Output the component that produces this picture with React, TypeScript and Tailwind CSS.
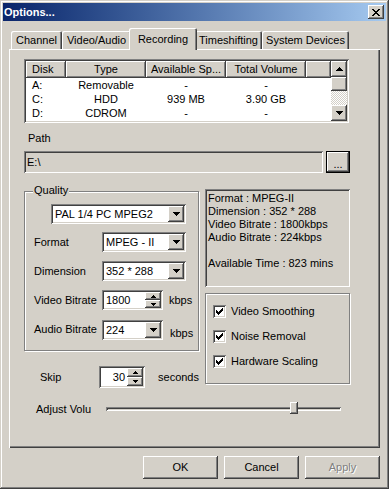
import React from "react"

const raised = "bg-[#d4d0c8] shadow-[inset_-1px_-1px_#404040,inset_1px_1px_#ffffff,inset_-2px_-2px_#808080,inset_2px_2px_#d4d0c8]"
const sunken = "shadow-[inset_1px_1px_#808080,inset_-1px_-1px_#ffffff,inset_2px_2px_#404040,inset_-2px_-2px_#d4d0c8]"
const etched = "border border-[#808080] shadow-[inset_1px_1px_#ffffff,1px_1px_#ffffff]"

function Arrow({ up, small }: { up?: boolean; small?: boolean }) {
  const rows = small ? [5, 3, 1] : [7, 5, 3, 1]
  const w = rows[0]
  const list = up ? [...rows].reverse() : rows
  return (
    <svg width={w} height={rows.length} viewBox={`0 0 ${w} ${rows.length}`} shapeRendering="crispEdges">
      {list.map((r, i) => (
        <rect key={i} x={(w - r) / 2} y={i} width={r} height={1} fill="#000" />
      ))}
    </svg>
  )
}

function Combo({ value, className }: { value: string; className: string }) {
  return (
    <div className={`flex h-[20px] bg-white p-[2px] ${sunken} ${className}`}>
      <div className="flex-1 pl-[2px] leading-[16px] whitespace-nowrap overflow-hidden">{value}</div>
      <div className={`flex w-[16px] items-center justify-center ${raised}`}>
        <Arrow />
      </div>
    </div>
  )
}

function Spin({ value, className, right }: { value: string; className: string; right?: boolean }) {
  return (
    <div className={`flex bg-white p-[2px] ${sunken} ${className}`}>
      <div className={`flex flex-1 items-center px-[2px] ${right ? "justify-end" : ""}`}>{value}</div>
      <div className="flex w-[16px] flex-col">
        <div className={`flex flex-1 items-center justify-center ${raised}`}>
          <Arrow up small />
        </div>
        <div className={`flex flex-1 items-center justify-center ${raised}`}>
          <Arrow small />
        </div>
      </div>
    </div>
  )
}

function Check({ label, first }: { label: string; first?: boolean }) {
  return (
    <div className={`flex h-[13px] items-center ${first ? "" : "mt-[12px]"}`}>
      <div className={`flex h-[13px] w-[13px] items-center justify-center bg-white ${sunken}`}>
        <svg width="7" height="7" viewBox="0 0 7 7" shapeRendering="crispEdges">
          <path d="M0 2h1v3h-1zM1 3h1v3h-1zM2 4h1v3h-1zM3 3h1v3h-1zM4 2h1v3h-1zM5 1h1v3h-1zM6 0h1v3h-1z" fill="#000" />
        </svg>
      </div>
      <span className="ml-[5px] leading-[13px]">{label}</span>
    </div>
  )
}

const cols = ["w-[40px]", "w-[80px]", "w-[80px]", "w-[80px]"]
const disks = [
  ["A:", "Removable", "-", "-"],
  ["C:", "HDD", "939 MB", "3.90 GB"],
  ["D:", "CDROM", "-", "-"],
]

export default function App() {
  return (
    <div className="h-[489px] w-[389px] bg-[#d4d0c8] p-[3px] font-['Liberation_Sans',Arial,sans-serif] text-[11px] text-black shadow-[inset_-1px_-1px_#404040,inset_1px_1px_#d4d0c8,inset_-2px_-2px_#808080,inset_2px_2px_#ffffff]">
      {/* title bar */}
      <div className="flex h-[18px] items-center justify-between bg-gradient-to-r from-[#0a246a] to-[#a6caf0] pl-[1px] pr-[2px]">
        <span className="text-[11px] font-bold text-white">Options...</span>
        <div className={`flex h-[14px] w-[16px] items-center justify-center ${raised}`}>
          <svg width="8" height="7" viewBox="0 0 8 7" shapeRendering="crispEdges">
            <path d="M0 0h2v1h-2zM6 0h2v1h-2zM1 1h2v1h-2zM5 1h2v1h-2zM2 2h4v1h-4zM3 3h2v1h-2zM2 4h4v1h-4zM1 5h2v1h-2zM5 5h2v1h-2zM0 6h2v1h-2zM6 6h2v1h-2z" fill="#000" />
          </svg>
        </div>
      </div>

      {/* tabs */}
      <div className="ml-[6px] mt-[7px] flex h-[21px] items-end pl-[2px]">
        <div className="flex h-[18px] w-[51px] items-center justify-center rounded-t-[2px] shadow-[inset_1px_1px_#ffffff,inset_-1px_0_#404040,inset_-2px_0_#808080]">Channel</div>
        <div className="flex h-[18px] w-[69px] items-center justify-center rounded-t-[2px] shadow-[inset_1px_1px_#ffffff,inset_-1px_0_#404040,inset_-2px_0_#808080]">Video/Audio</div>
        <div className="relative z-10 -mx-[2px] -mb-[1px] flex h-[22px] w-[68px] items-start justify-center rounded-t-[2px] bg-[#d4d0c8] pt-[3px] shadow-[inset_1px_1px_#ffffff,inset_-1px_0_#404040,inset_-2px_0_#808080]">Recording</div>
        <div className="flex h-[18px] w-[67px] items-center justify-center rounded-t-[2px] shadow-[inset_1px_1px_#ffffff,inset_-1px_0_#404040,inset_-2px_0_#808080]">Timeshifting</div>
        <div className="flex h-[18px] w-[87px] items-center justify-center rounded-t-[2px] shadow-[inset_1px_1px_#ffffff,inset_-1px_0_#404040,inset_-2px_0_#808080]">System Devices</div>
      </div>

      {/* panel */}
      <div className="ml-[6px] flex h-[399px] w-[371px] flex-col pl-[15px] pt-[10px] shadow-[inset_1px_1px_#ffffff,inset_-1px_-1px_#404040,inset_-2px_-2px_#808080]">
        {/* disk list */}
        <div className={`flex h-[64px] w-[325px] bg-white p-[2px] ${sunken}`}>
          <div className="flex flex-1 flex-col">
            <div className="flex h-[17px]">
              <div className={`${cols[0]} ${raised} pl-[6px] leading-[17px]`}>Disk</div>
              <div className={`${cols[1]} ${raised} text-center leading-[17px]`}>Type</div>
              <div className={`${cols[2]} ${raised} text-center leading-[17px] whitespace-nowrap`}>Available Sp...</div>
              <div className={`${cols[3]} ${raised} text-center leading-[17px]`}>Total Volume</div>
              <div className={`flex-1 ${raised}`} />
            </div>
            {disks.map((d) => (
              <div key={d[0]} className="flex h-[14px] leading-[14px]">
                <div className={`${cols[0]} pl-[6px]`}>{d[0]}</div>
                <div className={`${cols[1]} text-center`}>{d[1]}</div>
                <div className={`${cols[2]} text-center`}>{d[2]}</div>
                <div className={`${cols[3]} text-center`}>{d[3]}</div>
              </div>
            ))}
          </div>
          <div className="flex w-[16px] flex-col">
            <div className={`flex h-[16px] items-center justify-center ${raised}`}>
              <Arrow up />
            </div>
            <div className={`h-[14px] ${raised}`} />
            <div className="flex-1 bg-[repeating-conic-gradient(#ffffff_0_25%,#d4d0c8_0_50%)] bg-[length:2px_2px]" />
            <div className={`flex h-[16px] items-center justify-center ${raised}`}>
              <Arrow />
            </div>
          </div>
        </div>

        {/* path */}
        <div className="ml-[4px] mt-[9px] leading-[13px]">Path</div>
        <div className="mt-[6px] flex gap-[3px]">
          <div className={`flex h-[22px] w-[299px] items-center pl-[3px] ${sunken}`}>E:\</div>
          <div className="h-[22px] w-[24px] border border-black">
            <div className={`flex h-full w-full items-end justify-center pb-[3px] leading-[10px] ${raised}`}>...</div>
          </div>
        </div>

        <div className="mt-[16px] flex gap-[6px]">
          {/* left column */}
          <div className="flex w-[175px] flex-col">
            <div className={`relative mt-[2px] flex h-[160px] flex-col pt-[12px] ${etched}`}>
              <span className="absolute -top-[8px] left-[8px] bg-[#d4d0c8] px-[1px] leading-[13px]">Quality</span>
              <Combo value="PAL 1/4 PC MPEG2" className="ml-[26px] w-[135px]" />
              <div className="mt-[8px] flex items-center pl-[9px]">
                <span className="w-[68px]">Format</span>
                <Combo value="MPEG - II" className="w-[84px]" />
              </div>
              <div className="mt-[9px] flex items-center pl-[9px]">
                <span className="w-[68px]">Dimension</span>
                <Combo value="352 * 288" className="w-[84px]" />
              </div>
              <div className="mt-[9px] flex items-center pl-[9px]">
                <span className="w-[68px]">Video Bitrate</span>
                <Spin value="1800" className="h-[20px] w-[61px]" />
                <span className="ml-[6px]">kbps</span>
              </div>
              <div className="mt-[9px] flex items-center pl-[9px]">
                <span className="w-[68px]">Audio Bitrate</span>
                <Combo value="224" className="w-[61px]" />
                <span className="ml-[7px] mt-[8px] leading-[13px]">kbps</span>
              </div>
            </div>
            <div className="ml-[16px] mt-[15px] flex h-[22px] items-center">
              <span className="w-[60px]">Skip</span>
              <Spin value="30" right className="h-[22px] w-[47px]" />
              <span className="ml-[13px]">seconds</span>
            </div>
          </div>

          {/* right column */}
          <div className="flex w-[145px] flex-col">
            <div className={`h-[98px] pl-[3px] pt-[3px] leading-[13px] ${sunken}`}>
              <div>Format : MPEG-II</div>
              <div>Dimension : 352 * 288</div>
              <div>Video Bitrate : 1800kbps</div>
              <div>Audio Bitrate : 224kbps</div>
              <div className="h-[13px]" />
              <div>Available Time : 823 mins</div>
            </div>
            <div className={`mt-[6px] flex h-[91px] flex-col pl-[7px] pt-[11px] ${etched}`}>
              <Check label="Video Smoothing" first />
              <Check label="Noise Removal" />
              <Check label="Hardware Scaling" />
            </div>
          </div>
        </div>

        {/* volume */}
        <div className="mt-[11px] flex h-[20px] items-center">
          <span className="ml-[12px] w-[70px] leading-[13px]">Adjust Volu</span>
          <div className="relative flex h-[20px] w-[235px] items-center">
            <div className="h-[4px] w-full shadow-[inset_1px_1px_#808080,inset_-1px_-1px_#ffffff,inset_2px_2px_#404040,inset_-2px_-2px_#d4d0c8]" />
            <div className={`absolute left-[184px] top-[3px] h-[12px] w-[8px] ${raised}`} />
          </div>
        </div>
      </div>

      {/* buttons */}
      <div className="ml-[6px] mt-[8px] flex w-[371px] justify-end gap-[6px]">
        <div className={`flex h-[23px] w-[75px] items-center justify-center ${raised}`}>OK</div>
        <div className={`flex h-[23px] w-[75px] items-center justify-center ${raised}`}>Cancel</div>
        <div className={`flex h-[23px] w-[75px] items-center justify-center text-[#808080] [text-shadow:1px_1px_#ffffff] ${raised}`}>Apply</div>
      </div>
    </div>
  )
}
